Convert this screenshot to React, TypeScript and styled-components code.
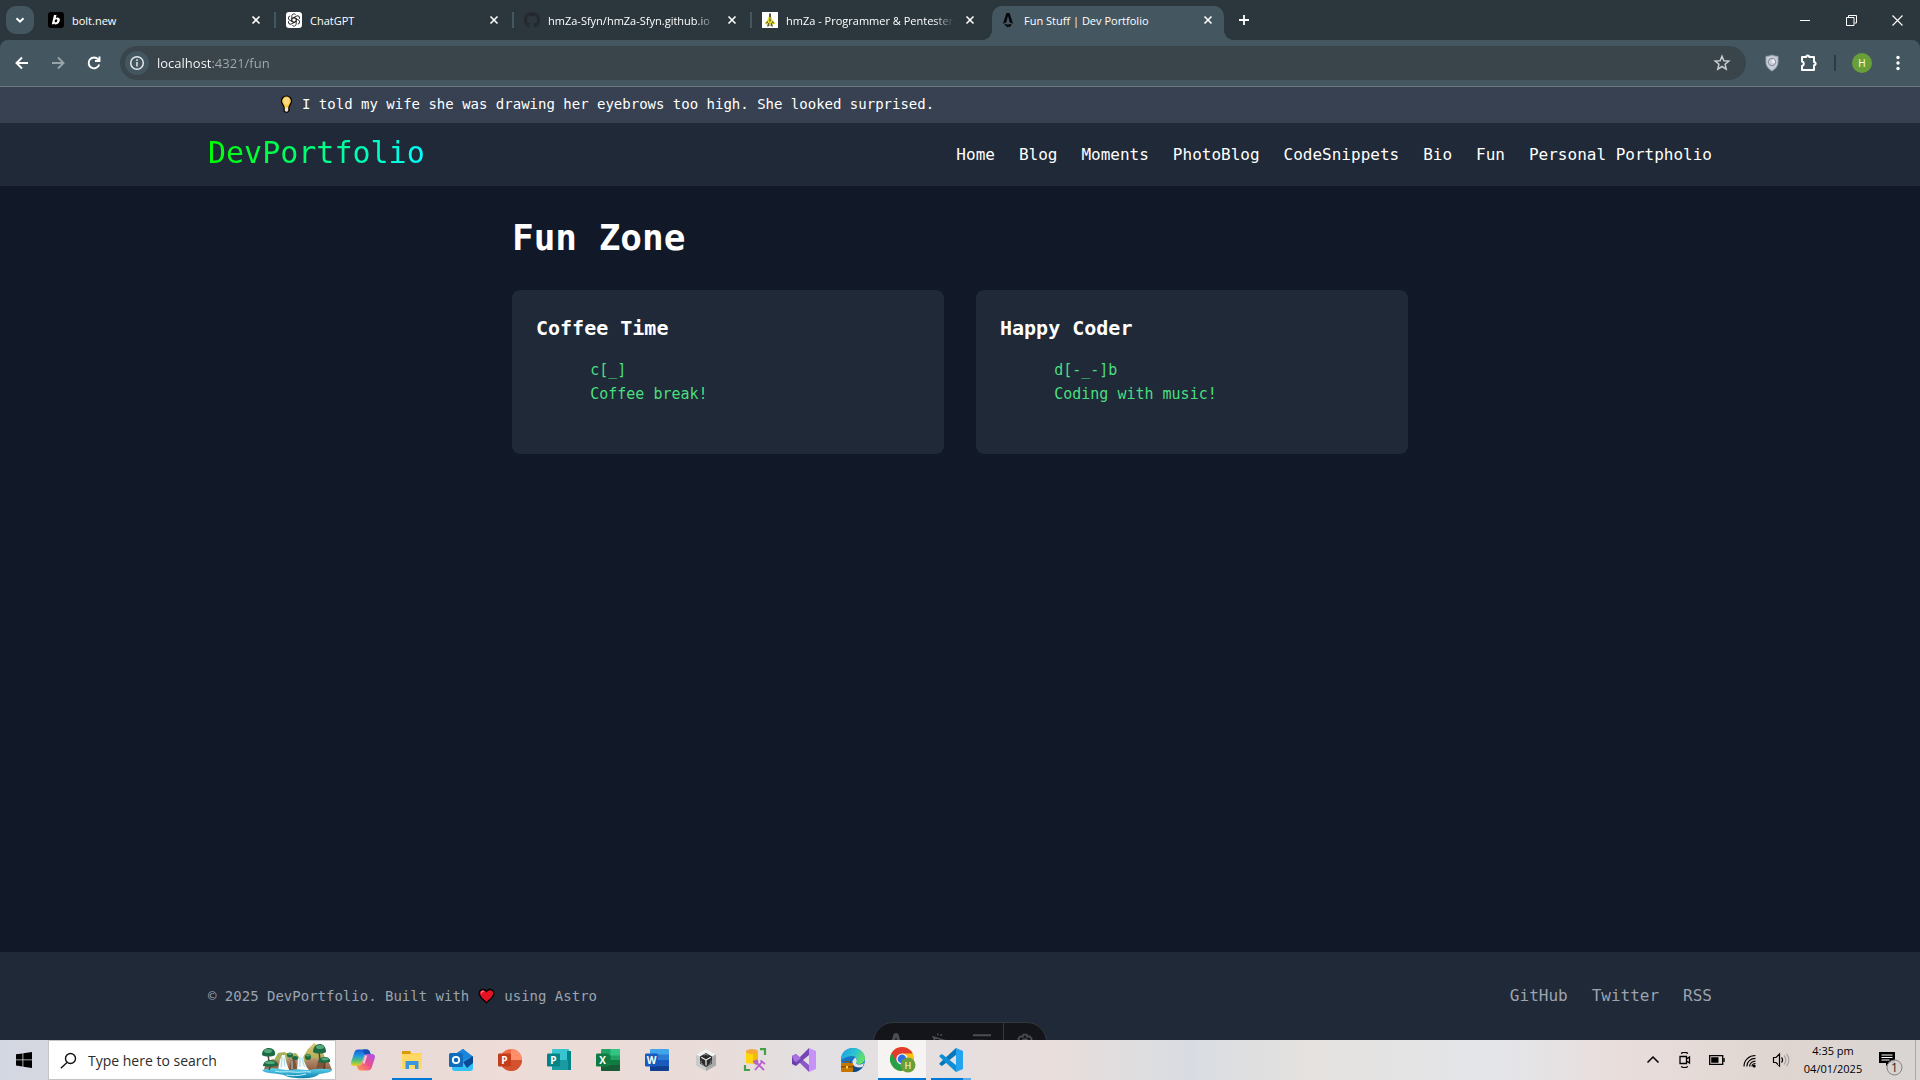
import React from "react";
import styled, { createGlobalStyle, css } from "styled-components";

const ui = `"Open Sans", "Noto Sans", sans-serif`;
const mono = `"DejaVu Sans Mono", "Liberation Mono", monospace`;

const GlobalStyle = createGlobalStyle`
  *, *::before, *::after { box-sizing: border-box; }
  body { margin: 0; background: #111827; }
  button, input { font: inherit; color: inherit; border: 0; padding: 0; background: none; }
  button { cursor: pointer; }
  h1, h2, p, pre, ul { margin: 0; padding: 0; }
  ul { list-style: none; }
  a { color: inherit; text-decoration: none; }
  svg { display: block; flex: none; }
`;

/* ---------- shell ---------- */

const Screen = styled.div`
  display: flex;
  flex-direction: column;
  height: 100vh;
  overflow: hidden;
  font-family: ${ui};
`;

const TabStrip = styled.header`
  display: flex;
  flex: none;
  height: 40px;
  padding-left: 6px;
  background: #2c373d;
  color: #fff;
`;

const TabSearch = styled.button`
  display: grid;
  place-items: center;
  width: 28px;
  height: 28px;
  margin: 6px 6px 0 0;
  border-radius: 10px;
  background: #445761;
`;

const Tabs = styled.div`
  display: flex;
  gap: 2px;
  min-width: 0;
`;

const Tab = styled.div<{ $active?: boolean }>`
  position: relative;
  display: flex;
  align-items: center;
  gap: 8px;
  width: 232px;
  height: 34px;
  margin-top: 6px;
  padding: 0 8px 6px;
  border-radius: 10px 10px 0 0;
  ${(p) =>
    p.$active &&
    css`
      background: #445761;
      &::before,
      &::after {
        content: "";
        position: absolute;
        bottom: 0;
        width: 10px;
        height: 10px;
      }
      &::before {
        left: -10px;
        background: radial-gradient(circle at 0 0, transparent 10px, #445761 10px);
      }
      &::after {
        right: -10px;
        background: radial-gradient(circle at 100% 0, transparent 10px, #445761 10px);
      }
    `}
`;

const TabTitle = styled.span<{ $fade?: boolean }>`
  flex: 1;
  min-width: 0;
  overflow: hidden;
  white-space: nowrap;
  padding-top: 2px;
  font-size: 11px;
  line-height: 18px;
  ${(p) => p.$fade && css`mask-image: linear-gradient(to right, #000 88%, transparent);`}
`;

const TabClose = styled.button`
  display: grid;
  place-items: center;
  width: 16px;
  height: 16px;
`;

const TabDivider = styled.span<{ $hidden?: boolean }>`
  width: 2px;
  height: 16px;
  margin-top: 12px;
  background: ${(p) => (p.$hidden ? "transparent" : "#445761")};
`;

const NewTab = styled.button`
  display: grid;
  place-items: center;
  width: 28px;
  height: 28px;
  margin: 6px 0 0 2px;
`;

const WindowControls = styled.div`
  display: flex;
  margin-left: auto;
`;

const WindowButton = styled.button`
  display: grid;
  place-items: center;
  width: 46px;
  height: 40px;
`;

const ToolbarBack = styled.div`
  flex: none;
  background: #2c373d;
`;

const Toolbar = styled.div`
  display: flex;
  align-items: center;
  height: 47px;
  padding: 0 4px;
  border-bottom: 1px solid #6d7b83;
  border-radius: 8px 8px 0 0;
  background: #445761;
  color: #fff;
`;

const ToolButton = styled.button<{ $dim?: boolean }>`
  display: grid;
  place-items: center;
  width: 36px;
  height: 34px;
  opacity: ${(p) => (p.$dim ? 0.45 : 1)};
`;

const AddressBar = styled.form`
  display: flex;
  flex: 1;
  align-items: center;
  gap: 8px;
  height: 34px;
  margin: 0 8px;
  padding: 0 15px 0 5px;
  border-radius: 17px;
  background: #39454b;
`;

const SiteInfo = styled.button`
  display: grid;
  place-items: center;
  width: 24px;
  height: 24px;
  border-radius: 50%;
  background: #445761;
`;

const UrlInput = styled.input`
  flex: 1;
  min-width: 0;
  height: 24px;
  font-size: 13px;
  outline: 0;
  color: transparent;
  background: linear-gradient(to right, #fff 55px, #a3abaf 55px);
  background-clip: text;
`;

const BarDivider = styled.span`
  width: 2px;
  height: 16px;
  margin: 0 8px;
  background: #2f3b41;
`;

const Avatar = styled.span`
  display: grid;
  place-items: center;
  width: 20px;
  height: 20px;
  border-radius: 50%;
  background: #689f38;
  color: #fff;
  font-size: 10px;
  line-height: 20px;
`;

/* ---------- web page ---------- */

const Page = styled.div`
  position: relative;
  display: flex;
  flex: 1;
  flex-direction: column;
  min-height: 0;
  overflow: hidden;
  background: #111827;
  color: #fff;
  font-family: ${mono};
  font-size: 16px;
  line-height: 24px;
`;

const JokeBar = styled.div`
  padding: 7px 0 9px;
  background: #374151;
`;

const Container = styled.div`
  display: flex;
  align-items: center;
  justify-content: space-between;
  max-width: 1536px;
  margin: 0 auto;
  padding: 0 16px;
`;

const Joke = styled.p`
  display: flex;
  align-items: center;
  gap: 9px;
  padding-left: 72px;
  font-size: 14px;
  line-height: 20px;
`;

const SiteHeader = styled.div`
  padding: 12px 0 15px;
  background: #1f2937;
`;

const SiteNav = styled.nav`
  padding-top: 4px;
`;

const Brand = styled.a`
  font-size: 30px;
  line-height: 36px;
  color: transparent;
  background: linear-gradient(to right, #00ff00, #00ffff);
  background-clip: text;
`;

const LinkRow = styled.ul<{ $muted?: boolean }>`
  display: flex;
  gap: 24px;
  color: ${(p) => (p.$muted ? "#9ca3af" : "#fff")};
`;

const Main = styled.main`
  flex: 1;
  width: 100%;
  max-width: 896px;
  margin: 0 auto;
  padding: 32px 0;
`;

const Title = styled.h1`
  margin-bottom: 32px;
  font-size: 36px;
  line-height: 40px;
`;

const CardGrid = styled.div`
  display: grid;
  grid-template-columns: 1fr 1fr;
  gap: 32px;
`;

const Card = styled.section`
  padding: 24px;
  border-radius: 8px;
  background: #1f2937;
`;

const CardTitle = styled.h2`
  margin-bottom: 16px;
  font-size: 20px;
  line-height: 28px;
`;

const Ascii = styled.pre`
  min-height: 72px;
  font-family: ${mono};
  font-size: 15px;
  line-height: 24px;
  color: #4ade80;
`;

const SiteFooter = styled.footer`
  padding: 32px 0;
  background: #1f2937;
`;

const Copyright = styled.p`
  display: flex;
  align-items: center;
  gap: 9px;
  font-size: 14px;
  line-height: 24px;
  color: #9ca3af;
`;

const DevToolbar = styled.div`
  position: absolute;
  bottom: -22px;
  left: 50%;
  display: flex;
  height: 40px;
  overflow: hidden;
  border: 1px solid #343841;
  border-radius: 20px;
  background: #13151a;
  color: #4b4d52;
  transform: translateX(-50%);
`;

const DevButton = styled.button<{ $last?: boolean }>`
  display: grid;
  place-items: center;
  width: 43px;
  height: 38px;
  border-left: ${(p) => (p.$last ? "1px solid #343841" : "0")};
`;

/* ---------- taskbar ---------- */

const Taskbar = styled.footer`
  display: flex;
  flex: none;
  height: 40px;
  color: #000;
  background: linear-gradient(
    to right,
    #d3d7e1 0,
    #e6dad8 18%,
    #eddcd7 26%,
    #e9dcd9 37%,
    #e2e0e3 43%,
    #e9dedc 55%,
    #d8dce2 62%,
    #e5e2df 68%,
    #e3e5e9 78%,
    #e9dedc 84%,
    #dfd5d0 93%,
    #d8d5d3 100%
  );
`;

const StartButton = styled.button`
  display: grid;
  place-items: center;
  width: 48px;
`;

const SearchBox = styled.label`
  display: flex;
  align-items: center;
  width: 288px;
  margin-right: 3px;
  padding: 0 2px 0 11px;
  border: 1px solid #c4c4c6;
  background: #fff;
`;

const SearchInput = styled.input`
  flex: 1;
  min-width: 0;
  margin-left: 11px;
  font-size: 14px;
  outline: 0;
  &::placeholder {
    color: #2b2b2b;
    opacity: 1;
  }
`;

const Apps = styled.nav`
  display: flex;
  gap: 1px;
`;

const AppButton = styled.button<{ $state?: "open" | "active" | "stacked" }>`
  display: grid;
  place-items: center;
  width: 48px;
  height: 40px;
  ${(p) =>
    p.$state === "open" &&
    css`background: linear-gradient(#0078d7, #0078d7) center bottom / 40px 2px no-repeat;`}
  ${(p) =>
    p.$state === "stacked" &&
    css`background: linear-gradient(to right, #0078d7 32px, #62aee8 32px) center bottom / 40px 2px no-repeat;`}
  ${(p) =>
    p.$state === "active" &&
    css`background: linear-gradient(#0078d7, #0078d7) center bottom / 48px 2px no-repeat, #f6f3f3;`}
`;

const Tray = styled.div`
  display: flex;
  align-items: center;
  margin-left: auto;
`;

const TrayButton = styled.button`
  display: grid;
  place-items: center;
  width: 32px;
  height: 40px;
`;

const Clock = styled.button`
  width: 72px;
  height: 40px;
  font-size: 11px;
  line-height: 18px;
  text-align: center;
`;

const ActionCenter = styled.button`
  display: grid;
  place-items: center;
  width: 46px;
  height: 40px;
`;

const ShowDesktop = styled.button`
  width: 5px;
  height: 40px;
  border-left: 1px solid #aaa6a4;
`;

/* ---------- drawings ---------- */

const Stroke = ({ d, size = 16, w = 2, box = 16 }: { d: string; size?: number; w?: number; box?: number }) => (
  <svg width={size} height={size} viewBox={`0 0 ${box} ${box}`} fill="none" stroke="currentColor" strokeWidth={w} aria-hidden="true">
    <path d={d} />
  </svg>
);

const BoltIcon = () => (
  <svg width="16" height="16" viewBox="0 0 16 16">
    <rect width="16" height="16" rx="3" fill="#000" />
    <path fill="#fff" fillRule="evenodd" d="M6 3h2.500l-.7 3c.5-.4 1.100-.6 1.700-.6 1.700 0 2.700 1.200 2.300 3.100-.4 2.100-1.900 3.900-4 3.900-.8 0-1.400-.3-1.800-.9L5.600 12.300H3.800zM8.200 7.300c-.7 0-1.300.6-1.500 1.500-.2.900.2 1.500.9 1.500.8 0 1.400-.7 1.600-1.600.2-.8-.2-1.400-1-1.400z" />
  </svg>
);

const ChatGptIcon = () => (
  <svg width="16" height="16" viewBox="0 0 16 16">
    <rect width="16" height="16" rx="3" fill="#fff" />
    <g fill="none" stroke="#222" strokeWidth="0.9">
      {[0, 60, 120, 180, 240, 300].map((a) => (
        <path key={a} transform={`rotate(${a} 8 8)`} d="M8 5.500 5.800 6.800V3.900a2.200 2.200 0 0 1 3.900-1.200M8 5.500l2.600 1.500" />
      ))}
    </g>
  </svg>
);

const GithubIcon = () => (
  <svg width="16" height="16" viewBox="0 0 16 16" fill="#24292f">
    <path d="M8 0C3.580 0 0 3.580 0 8c0 3.540 2.290 6.530 5.470 7.590.4.070.55-.17.55-.38v-1.490c-2.010.37-2.530-.49-2.690-.94-.09-.23-.48-.94-.82-1.130-.28-.15-.68-.52-.01-.53.63-.01 1.080.58 1.230.82.72 1.210 1.870.87 2.330.66.07-.52.28-.87.51-1.070-1.780-.2-3.640-.89-3.640-3.950 0-.87.31-1.590.82-2.150-.08-.2-.36-1.020.08-2.120 0 0 .67-.21 2.200.82a7.600 7.600 0 0 1 4 0c1.530-1.040 2.200-.82 2.200-.82.44 1.100.16 1.920.08 2.120.51.56.82 1.270.82 2.150 0 3.070-1.870 3.750-3.650 3.950.29.25.54.73.54 1.480v2.200c0 .21.15.46.55.38A8 8 0 0 0 16 8c0-4.420-3.580-8-8-8z" />
  </svg>
);

const ArtIcon = () => (
  <svg width="16" height="16" viewBox="0 0 16 16">
    <rect width="16" height="16" fill="#fff" />
    <path fill="#e0dc2c" d="M7 4h2l1.500 4 3 3.500-2.500 1H5l-2.500-1 3-3.500z" />
    <path fill="#5b5a35" d="M7 1.500h2v4H7zM7.300 6.500h1.400v3H7.300zM4 10.500l2-1.500v1.500l-1.500 1zM12 10.500 10 9v1.500l1.500 1zM5 14.500 6.200 11h1v2h1.600v-2h1l1.200 3.500H9.500l-.5-1H7l-.5 1z" />
  </svg>
);

const AstroIcon = ({ size = 16, fill = "#060708" }: { size?: number; fill?: string }) => (
  <svg width={size} height={size} viewBox="0 0 16 16" fill={fill}>
    <path d="M7 1h2.100c.4 0 .6.200.7.500L13 11.700c-1-.5-2.100-.9-3.200-1.100L8.300 4.800c-.1-.3-.5-.3-.6 0l-1.500 5.800c-1.100.2-2.200.6-3.200 1.100L6.200 1.500C6.300 1.200 6.600 1 7 1zM4.700 11.700c1.300 1 5.300 1 6.600 0 .3 1.100-.2 2.100-1.200 2.700-.5.300-.6.700-.6 1.100-.5-.2-.8-.7-.7-1.200-.6.100-.9.500-.8 1.500-.7-.3-.9-.9-.9-1.500-1.600-.3-2.600-1.200-2.400-2.600z" />
  </svg>
);

const InfoIcon = () => (
  <svg width="16" height="16" viewBox="0 0 16 16" fill="none" stroke="#e3e7e9" strokeWidth="1.500">
    <circle cx="8" cy="8" r="6.300" />
    <path d="M8 7v4.500M8 4.300v1.600" />
  </svg>
);

const ShieldIcon = () => (
  <svg width="16" height="18" viewBox="0 0 16 18">
    <path d="M8 1c2 1 4 1.400 6 1.400V8c0 4-2.500 6.700-6 9-3.500-2.300-6-5-6-9V2.400C4 2.400 6 2 8 1z" fill="#c9cfd8" stroke="#9ba5b2" />
    <circle cx="8" cy="8" r="3.600" fill="none" stroke="#8e98a5" strokeWidth="1.200" />
    <path d="M8 8h3M8 8l2-2.500" stroke="#f3f5f7" strokeWidth="1.300" />
  </svg>
);

const PuzzleIcon = () => (
  <svg width="20" height="20" viewBox="0 0 20 20" fill="none" stroke="#fff" strokeWidth="2" strokeLinejoin="round">
    <path d="M4 4h4.200a1.500 1.500 0 0 1 3 0H16v5a1.600 1.600 0 0 1 0 3.200V17H4v-4a2.300 2.300 0 0 0 0-4.500z" />
  </svg>
);

const BulbIcon = () => (
  <svg width="13" height="18" viewBox="0 0 13 18">
    <path d="M6.500 1a5 5 0 0 1 5 5c0 2.800-2.300 4-2.600 6.500v3.300l-1.400 1.400h-2l-1.400-1.400v-3.300C3.800 10 1.500 8.800 1.500 6a5 5 0 0 1 5-5z" fill="#ffc83d" stroke="#000" strokeWidth="1.200" />
    <path d="M5 12.500h3v3L7 16.500H6l-1-1z" fill="#e6e6e6" />
    <path d="M4 3.500C5 2 8 2 9 3.500c1.500 2-.5 5-1.500 6.500h-2C4.500 8.500 2.500 5.500 4 3.500z" fill="#ffd983" />
  </svg>
);

const HeartIcon = () => (
  <svg width="17" height="16" viewBox="0 0 17 16">
    <path d="M8.500 14.700C5 11.500 1.200 9 1.200 5.200 1.200 1.200 6.500.2 8.500 3.500c2-3.300 7.300-2.300 7.300 1.700 0 3.800-3.800 6.300-7.300 9.500z" fill="#e81224" stroke="#000" strokeWidth="1.300" />
    <path d="M3.500 5c0-1.200.8-1.800 1.800-1.800" stroke="#f58a92" strokeWidth="1.200" fill="none" strokeLinecap="round" />
  </svg>
);

const Waterfall = () => (
  <svg width="72" height="37" viewBox="0 0 72 37">
    <defs>
      <linearGradient id="sea" x1="0" y1="0" x2="0" y2="1">
        <stop offset="0" stopColor="#5cd3ee" />
        <stop offset="1" stopColor="#0b7fae" />
      </linearGradient>
      <linearGradient id="hill" x1="0" y1="0" x2="0" y2="1">
        <stop offset="0" stopColor="#dcc76e" />
        <stop offset="1" stopColor="#8f9a4a" />
      </linearGradient>
      <linearGradient id="rock" x1="0" y1="0" x2="0" y2="1">
        <stop offset="0" stopColor="#c59a78" />
        <stop offset="1" stopColor="#8e6247" />
      </linearGradient>
    </defs>
    <path d="M34 24 42 15 47 7 53 1l7 5 6 14-4 8H36z" fill="url(#hill)" />
    <path d="M12 20 17 11l6-1 6 2 6-1 4 5 2 10H14z" fill="#a9b25b" />
    <path d="M3 28c1-6 4-9 9-11l6 2 3 9zM24 28l1-10 6-4 5 3 3 11zM43 28l1-9 5-3 6 1 5-2 7 3 4 10z" fill="url(#rock)" />
    <path d="M28 28l2-9 4-2 2 11zM55 28l2-9 5-2 4 11z" fill="#7f5438" />
    <path d="M17 28l2-10 2-5h3l1 6 3 9zM36 28l1-11 2-4h3l1 6 4 9z" fill="#f1fafd" />
    <path d="M21 15l-1 12M23 16l1 11M39 15v12M41 16l3 11M31 19v8" stroke="#a6d9ea" fill="none" />
    <path d="M1 28c6-2 13-2 19-1l8 1 9-1 11 1c8-1 17-2 23 0-1 3-8 3-13 4-2 5-28 6-35 1C16 31 3 32 1 28z" fill="url(#sea)" />
    <path d="M14 29c6 2 12 0 18 1s12-1 18 0M25 33c6 1 13 1 20-1" stroke="#bdf0fb" fill="none" />
    <path d="M18 27c2-3 4-1 5-3 2 1 4 1 5 4zM36 27c2-3 4-2 6-3 2 1 4 1 6 4z" fill="#fff" />
    <path d="M7 12 8 20M58 9l1 10M64 19l-1 8M10 23l-2 5" stroke="#5c4030" strokeWidth="1.500" />
    <g fill="#1c6b45">
      <path d="M1 13c0-5 3-7 7-7s7 3 6 7c-3 2-10 2-13 0zM2 24c0-4 4-6 8-6s8 3 7 6c-4 1-11 1-15 0zM52 10c0-5 3-8 7-8s6 4 6 8c-3 2-10 2-13 0zM57 20c1-4 4-5 7-5s6 2 5 5c-3 1-9 1-12 0z" />
      <ellipse cx="29" cy="13" rx="3" ry="2.500" />
      <ellipse cx="34" cy="16" rx="3" ry="2" />
      <ellipse cx="47" cy="15" rx="3" ry="3" />
    </g>
    <g fill="#52a878">
      <ellipse cx="7" cy="9" rx="4" ry="2" />
      <ellipse cx="9" cy="20.500" rx="5" ry="1.600" />
      <ellipse cx="59" cy="5" rx="4" ry="2" />
      <ellipse cx="64" cy="17" rx="3.500" ry="1.400" />
      <ellipse cx="29" cy="12" rx="2" ry="1" />
      <ellipse cx="47" cy="13.500" rx="2" ry="1" />
    </g>
  </svg>
);

const Icon24 = ({ children }: { children: React.ReactNode }) => (
  <svg width="24" height="24" viewBox="0 0 24 24" aria-hidden="true">
    {children}
  </svg>
);

const letter = { fill: "#fff", fontFamily: "Open Sans, sans-serif", fontWeight: 700, fontSize: 10, textAnchor: "middle" as const };

const Copilot = () => (
  <Icon24>
    <defs>
      <linearGradient id="cpA" x1="0" y1="0" x2="0" y2="1">
        <stop offset="0" stopColor="#1b58d8" />
        <stop offset=".4" stopColor="#1e9be0" />
        <stop offset=".7" stopColor="#5cc46a" />
        <stop offset="1" stopColor="#f5cf1c" />
      </linearGradient>
      <linearGradient id="cpB" x1="1" y1="0" x2="0" y2="1">
        <stop offset="0" stopColor="#a553f0" />
        <stop offset=".5" stopColor="#ee4f8b" />
        <stop offset="1" stopColor="#ff9d4d" />
      </linearGradient>
    </defs>
    <path d="M7 1.500h9c1.500 0 2.400 1 2.900 2.500l.8 2.500h-4c-1.600 0-2.400.8-3 2.500l-2 6C10 17 9 18 7 18H3c-2.500 0-3.500-2-2.700-4.600L3.300 4.500C4 2.500 5 1.500 7 1.500z" fill="url(#cpA)" />
    <path d="M12 1.500h4c1.500 0 2.400 1 2.900 2.500l.8 2.500h-5.200c-1 0-1.700-.8-2-2z" fill="#174db5" />
    <path d="M17 22.500H9.500c-1.500 0-2.400-1-2.900-2.500l-.8-2.500H8c1.600 0 2.400-.8 3-2.500l2-6c.7-2 1.700-3 3.500-3H21c2.500 0 3.500 2 2.700 4.600l-3 8.900c-.7 2-1.700 3-3.700 3z" fill="url(#cpB)" />
    <path d="M11.500 15 14 7.500h2.200L13.500 16z" fill="#f3e8f2" opacity=".8" />
  </Icon24>
);

const Explorer = () => (
  <Icon24>
    <path d="M2 3h8l1.500 2H22v16H2z" fill="#ffd35c" />
    <path d="M2 3h8l1 2-1 1H2z" fill="#d99a0b" />
    <path d="M2 7h20v14H2z" fill="#ffd966" />
    <path d="M5.500 13h13v8H15v-4H9v4H5.500z" fill="#3b97dd" />
  </Icon24>
);

const Outlook = () => (
  <Icon24>
    <path d="M3 8 14 1l9 7v11l-3 4H7l-4-4z" fill="#1268c3" />
    <path d="M14 1 23 8l-9 7-8-8z" fill="#1a86dd" />
    <path d="M12 14 24 8v12c0 2-1 3-3 3H6c-2 0-3-1-3-3v-3z" fill="#33c1f5" />
    <path d="m14 14 10-6v7l-6 5z" fill="#0d4a96" />
    <rect x="0" y="5" width="14" height="14" rx="1.500" fill="#0f6cbd" />
    <circle cx="7" cy="12" r="3.200" fill="none" stroke="#fff" strokeWidth="1.800" />
  </Icon24>
);

const PowerPoint = () => (
  <Icon24>
    <circle cx="13" cy="12" r="11" fill="#ed6c47" />
    <path d="M13 1a11 11 0 0 1 11 11H13z" fill="#ff8f6b" />
    <path d="M2 12h22a11 11 0 0 1-22 0z" fill="#d35230" />
    <rect x="0" y="5.500" width="13" height="13" rx="1.200" fill="#c43e1c" />
    <text x="6.500" y="15.800" {...letter}>P</text>
  </Icon24>
);

const Publisher = () => (
  <Icon24>
    <rect x="5" y="1" width="17" height="21" rx="1" fill="#37c6d0" />
    <path d="M20 3h4v19h-4z" fill="#038387" />
    <path d="M5 12h16v10H5z" fill="#1a9ba1" />
    <rect x="0" y="5.500" width="13" height="13" rx="1.200" fill="#038387" />
    <text x="6.500" y="15.800" {...letter}>P</text>
  </Icon24>
);

const Excel = () => (
  <Icon24>
    <rect x="5" y="1" width="19" height="22" rx="1.200" fill="#21a366" />
    <path d="M14.500 1H23a1 1 0 0 1 1 1v5.500h-9.500z" fill="#33c481" />
    <path d="M5 7.500h9.500v9H5zM14.500 12H24v5h-9.500z" fill="#107c41" />
    <path d="M5 17h19v5a1 1 0 0 1-1 1H6a1 1 0 0 1-1-1z" fill="#185c37" />
    <rect x="0" y="5.500" width="13" height="13" rx="1.200" fill="#107c41" />
    <text x="6.500" y="15.800" {...letter}>X</text>
  </Icon24>
);

const Word = () => (
  <Icon24>
    <rect x="5" y="1" width="19" height="22" rx="1.200" fill="#41a5ee" />
    <path d="M5 6.500h19V12H5z" fill="#2b7cd3" />
    <path d="M5 12h19v5.500H5z" fill="#185abd" />
    <path d="M5 17.500h19V22a1 1 0 0 1-1 1H6a1 1 0 0 1-1-1z" fill="#103f91" />
    <rect x="0" y="5.500" width="13" height="13" rx="1.200" fill="#185abd" />
    <text x="6.500" y="15.800" {...letter}>W</text>
  </Icon24>
);

const Unity = () => (
  <Icon24>
    <path d="m12 1 10 5.500v11L12 23 2 17.500v-11z" fill="#c9cbcb" />
    <path d="m12 1 10 5.500L12 12 2 6.500z" fill="#f2f2f2" />
    <path d="M12 12l10-5.500v11L12 23z" fill="#a8aaaa" />
    <path d="m12 5 6 3.500v7L12 19l-6-3.500v-7z" fill="#2a2a2a" />
    <path d="M12 12v5.500M12 12 7.200 9.200M12 12l4.800-2.800" stroke="#e4e4e4" strokeWidth="1.300" />
    <path d="M7 12.500v2.700l2.500 1.500M17 12.500v2.700l-2.500 1.500M9.800 7.300 12 6.200l2.200 1.100" stroke="#8a8a8a" fill="none" />
  </Icon24>
);

const SqlTools = () => (
  <Icon24>
    <path d="M3 3.500v11c0 1.500 12 1.500 12 0v-11z" fill="#ffd60a" />
    <path d="M10 4h5v11c-1 .8-3 1-5 1z" fill="#f2bd00" />
    <ellipse cx="9" cy="3.500" rx="6" ry="2.500" fill="#f5a83c" />
    <path d="M17 1.200h5V7M2 17v5h5" stroke="#43a047" strokeWidth="2.200" fill="none" />
    <path d="m12 22 7-8M13 14l8 8M17.500 12.500 22 16M11 13.500l2.500-1 1 1-1.500 2.500z" stroke="#b65fd0" strokeWidth="1.800" fill="none" />
  </Icon24>
);

const VisualStudio = () => (
  <Icon24>
    <path d="M0 8 4 6v12l-4-2z" fill="#6b3fa8" />
    <path d="M4 6 17 17v7L7 14 4 11z" fill="#8a57c8" />
    <path d="M4 18 17 7V0L7 10l-3 3z" fill="#7546b5" />
    <path d="M0 8 4 6l5 4.300L4 14l-2-1z" fill="#a873dd" />
    <path d="m17 0 7 3v18l-7 3z" fill="#c792f5" />
  </Icon24>
);

const EdgeWork = () => (
  <Icon24>
    <defs>
      <linearGradient id="edA" x1="0" y1="0" x2="1" y2=".4">
        <stop offset="0" stopColor="#1b9de2" />
        <stop offset=".6" stopColor="#2bc3d2" />
        <stop offset="1" stopColor="#62e068" />
      </linearGradient>
    </defs>
    <circle cx="12" cy="12" r="12" fill="#1575c9" />
    <path d="M0 12C0 4 5.500 0 12 0c7 0 12 5 12 10 0 4-3 6-6 6-2.500 0-3.500-1-3-2 1.500-3 0-6-4-6-5 0-9 3-11 4z" fill="url(#edA)" />
    <path d="M10 12c0 6 5 9 12 6-2 4-6 6-10 6-3 0-5-6-2-12z" fill="#114a8b" />
    <path d="M14 9.500c2 1 2 4 1 5.500 1 2 5 2 8 0l-1.500 4c-6 1.500-10.500-1-10-6z" fill="#e6e3e5" />
    <rect x="0" y="15" width="12" height="9" rx="1" fill="#c77700" />
    <path d="M4 15v-1.500h4V15" fill="none" stroke="#8a4f00" />
    <path d="M0 18h12v1.500H0z" fill="#8a4f00" />
    <rect x="5" y="18" width="2" height="2.500" fill="#ffd35c" />
  </Icon24>
);

const Chrome = () => (
  <svg width="28" height="28" viewBox="0 0 28 28">
    <circle cx="14" cy="13" r="12" fill="#fbc116" />
    <path d="M3.600 7A12 12 0 0 0 14 25l5.200-9L14 13z" fill="#27a149" />
    <path d="M14 7.500h10.700A12 12 0 0 0 3.600 7l5.600 9.500z" fill="#e33b2e" />
    <circle cx="14" cy="13" r="5.600" fill="#fff" />
    <circle cx="14" cy="13" r="4.400" fill="#2a72e8" />
    <circle cx="20" cy="19" r="7.500" fill="#689f38" />
    <text x="20" y="22.500" fill="#fff" fontFamily="Roboto, sans-serif" fontSize="9" textAnchor="middle">H</text>
  </svg>
);

const VsCode = () => (
  <Icon24>
    <path d="M17.500 6.500 3 18l-2.500-1.500v-1.200L17 0l1 1z" fill="#0877b9" />
    <path d="M17.500 17.500 3 6 .5 7.500v1.200L17 24l1-1z" fill="#0d8fd8" />
    <path d="M17 0 24 3v18l-7 3z" fill="#24a3ee" />
  </Icon24>
);

const tabs = [
  { title: "bolt.new", icon: <BoltIcon /> },
  { title: "ChatGPT", icon: <ChatGptIcon /> },
  { title: "hmZa-Sfyn/hmZa-Sfyn.github.io", icon: <GithubIcon />, fade: true },
  { title: "hmZa - Programmer & Pentester", icon: <ArtIcon />, fade: true },
  { title: "Fun Stuff | Dev Portfolio", icon: <AstroIcon />, active: true },
];

const navLinks = ["Home", "Blog", "Moments", "PhotoBlog", "CodeSnippets", "Bio", "Fun", "Personal Portpholio"];

const cards = [
  { title: "Coffee Time", art: "      c[_]\n      Coffee break!\n" },
  { title: "Happy Coder", art: "      d[-_-]b\n      Coding with music!\n" },
];

const apps: { name: string; icon: React.ReactNode; state?: "open" | "active" | "stacked" }[] = [
  { name: "Copilot", icon: <Copilot /> },
  { name: "File Explorer", icon: <Explorer />, state: "open" },
  { name: "Outlook", icon: <Outlook /> },
  { name: "PowerPoint", icon: <PowerPoint /> },
  { name: "Publisher", icon: <Publisher /> },
  { name: "Excel", icon: <Excel /> },
  { name: "Word", icon: <Word /> },
  { name: "Unity Hub", icon: <Unity /> },
  { name: "SQL tools", icon: <SqlTools /> },
  { name: "Visual Studio", icon: <VisualStudio /> },
  { name: "Edge", icon: <EdgeWork /> },
  { name: "Chrome", icon: <Chrome />, state: "active" },
  { name: "VS Code", icon: <VsCode />, state: "stacked" },
];

function BrowserChrome() {
  return (
    <>
      <TabStrip>
        <TabSearch aria-label="Search tabs">
          <Stroke size={10} box={10} d="M1.500 3.200 5 6.700l3.500-3.500" />
        </TabSearch>
        <Tabs>
          {tabs.map((t, i) => (
            <React.Fragment key={t.title}>
              <Tab $active={t.active}>
                {t.icon}
                <TabTitle $fade={t.fade}>{t.title}</TabTitle>
                <TabClose aria-label={`Close ${t.title}`}>
                  <Stroke size={10} box={10} w={1.6} d="M1.500 1.500l7 7M8.500 1.500l-7 7" />
                </TabClose>
              </Tab>
              <TabDivider $hidden={i > 2} />
            </React.Fragment>
          ))}
        </Tabs>
        <NewTab aria-label="New tab">
          <Stroke size={12} box={12} w={1.8} d="M6 1v10M1 6h10" />
        </NewTab>
        <WindowControls>
          <WindowButton aria-label="Minimize">
            <Stroke size={10} box={10} w={1} d="M0 5.500h10" />
          </WindowButton>
          <WindowButton aria-label="Restore">
            <Stroke size={11} box={11} w={1} d="M.5 2.500h7.500v8H.5zM2.500 2.500v-2h8v7.500H8.500" />
          </WindowButton>
          <WindowButton aria-label="Close">
            <Stroke size={11} box={11} w={1.1} d="M.5.500l10 10M10.500.500l-10 10" />
          </WindowButton>
        </WindowControls>
      </TabStrip>
      <ToolbarBack>
        <Toolbar>
          <ToolButton aria-label="Back">
            <Stroke w={1.9} d="M14 8H3M8 2.500 2.500 8 8 13.500" />
          </ToolButton>
          <ToolButton aria-label="Forward" $dim>
            <Stroke w={1.9} d="M2 8h11M8 2.500 13.500 8 8 13.500" />
          </ToolButton>
          <ToolButton aria-label="Reload">
            <Stroke w={1.9} d="M13.200 9.500A5.400 5.400 0 1 1 12.200 4.500L13.500 6M13.500 1.500V6H9" />
          </ToolButton>
          <AddressBar onSubmit={(e) => e.preventDefault()}>
            <SiteInfo type="button" aria-label="View site information">
              <InfoIcon />
            </SiteInfo>
            <UrlInput aria-label="Address" defaultValue="localhost:4321/fun" />
            <button type="button" aria-label="Bookmark this tab">
              <svg width="18" height="18" viewBox="0 0 18 18" fill="none" stroke="#c8cdd0" strokeWidth="1.500">
                <path d="m9 2.200 1.900 4.500 4.900.4-3.700 3.200 1.100 4.800L9 12.500l-4.200 2.600 1.100-4.800L2.200 7.100l4.900-.4z" />
              </svg>
            </button>
          </AddressBar>
          <ToolButton aria-label="Shield extension">
            <ShieldIcon />
          </ToolButton>
          <ToolButton aria-label="Extensions">
            <PuzzleIcon />
          </ToolButton>
          <BarDivider />
          <ToolButton aria-label="Profile">
            <Avatar>H</Avatar>
          </ToolButton>
          <ToolButton aria-label="Menu">
            <svg width="4" height="16" viewBox="0 0 4 16" fill="#fff">
              <circle cx="2" cy="2.500" r="1.700" />
              <circle cx="2" cy="8" r="1.700" />
              <circle cx="2" cy="13.500" r="1.700" />
            </svg>
          </ToolButton>
        </Toolbar>
      </ToolbarBack>
    </>
  );
}

function Site() {
  return (
    <Page>
      <JokeBar>
        <Container>
          <Joke>
            <BulbIcon />
            I told my wife she was drawing her eyebrows too high. She looked surprised.
          </Joke>
        </Container>
      </JokeBar>
      <SiteHeader>
        <Container>
          <Brand href="#home">DevPortfolio</Brand>
          <SiteNav>
            <LinkRow>
              {navLinks.map((l) => (
                <li key={l}>
                  <a href="#nav">{l}</a>
                </li>
              ))}
            </LinkRow>
          </SiteNav>
        </Container>
      </SiteHeader>
      <Main>
        <Title>Fun Zone</Title>
        <CardGrid>
          {cards.map((c) => (
            <Card key={c.title}>
              <CardTitle>{c.title}</CardTitle>
              <Ascii>{c.art}</Ascii>
            </Card>
          ))}
        </CardGrid>
      </Main>
      <SiteFooter>
        <Container>
          <Copyright>
            © 2025 DevPortfolio. Built with
            <HeartIcon />
            using Astro
          </Copyright>
          <LinkRow $muted>
            {["GitHub", "Twitter", "RSS"].map((l) => (
              <li key={l}>
                <a href="#footer">{l}</a>
              </li>
            ))}
          </LinkRow>
        </Container>
      </SiteFooter>
      <DevToolbar>
        <DevButton aria-label="Astro menu">
          <AstroIcon size={20} fill="#4b4d52" />
        </DevButton>
        <DevButton aria-label="Inspect">
          <Stroke size={18} w={1.4} d="M3 3.500 14 7l-5 2-2 5zM7 2V.5M9.500 2.500l1-1.500" />
        </DevButton>
        <DevButton aria-label="Audit">
          <Stroke size={18} w={1.8} d="M0 2h16M0 7h9M0 12h6M11 7a3 3 0 1 1 0 6 3 3 0 0 1 0-6" />
        </DevButton>
        <DevButton aria-label="Settings" $last>
          <Stroke
            size={18}
            w={1.5}
            d="M6.500 1.500h3l.5 2 2-.7 2 2.200-1 1.800 2 1.200-.5 2.500-2 .5v2.500l-2.500 1L8 13l-2 1.500-2.500-1V11l-2-.5L1 8l2-1.200L2 5l2-2.200 2 .7zM8 5.500a2.500 2.500 0 1 0 0 5 2.500 2.500 0 0 0 0-5z"
          />
        </DevButton>
      </DevToolbar>
    </Page>
  );
}

function WindowsTaskbar() {
  return (
    <Taskbar>
      <StartButton aria-label="Start">
        <svg width="16" height="16" viewBox="0 0 16 16">
          <path d="M0 2.300 6.500 1.400v6.100H0zM7.300 1.300 16 0v7.500H7.300zM0 8.300h6.500v6.100L0 13.500zM7.300 8.300H16V16l-8.700-1.300z" />
        </svg>
      </StartButton>
      <SearchBox>
        <svg width="17" height="17" viewBox="0 0 17 17" fill="none" stroke="#111" strokeWidth="1.400">
          <circle cx="10.500" cy="6.500" r="5" />
          <path d="M7 10.500.8 16.300" />
        </svg>
        <SearchInput aria-label="Search" placeholder="Type here to search" />
        <Waterfall />
      </SearchBox>
      <Apps>
        {apps.map((a) => (
          <AppButton key={a.name} aria-label={a.name} $state={a.state}>
            {a.icon}
          </AppButton>
        ))}
      </Apps>
      <Tray>
        <TrayButton aria-label="Show hidden icons">
          <Stroke size={14} box={14} w={1.5} d="M1.500 9.500 7 4l5.500 5.500" />
        </TrayButton>
        <TrayButton aria-label="Meet now">
          <Stroke w={1.3} d="M3 4.500h6.500v7H3zM9.500 7l3-2v6l-3-2M4 1.500C6 .3 9 .3 11 1.500M4 14.500c2 1.200 5 1.200 7 0" />
        </TrayButton>
        <TrayButton aria-label="Battery">
          <svg width="16" height="10" viewBox="0 0 16 10">
            <path d="M.7.700h13v8.600H.7z" fill="none" stroke="#000" strokeWidth="1.300" />
            <path d="M2.200 2.200h7.300v5.600H2.200zM14.300 3h1.400v4h-1.400z" />
          </svg>
        </TrayButton>
        <TrayButton aria-label="Wi-Fi">
          <svg width="16" height="16" viewBox="0 0 16 16" fill="none" stroke="#000" strokeWidth="1.200">
            <path d="M3 14.500C3 8 8 3.500 14.500 3.500M5.800 14.500c0-4.800 3.900-8.200 8.700-8.200M8.600 14.500c0-3.200 2.700-5.400 5.900-5.400M11 14.500c0-1.800 1.500-3 3.500-3" />
            <circle cx="13.200" cy="14" r="1.500" fill="#000" stroke="none" />
          </svg>
        </TrayButton>
        <TrayButton aria-label="Volume">
          <svg width="18" height="16" viewBox="0 0 18 16" fill="none" stroke="#000" strokeWidth="1.200">
            <path d="M1.500 5.500h2.500L7.500 2v12L4 10.500H1.500zM9.500 5.500c1.300 1.500 1.300 3.500 0 5" />
            <path d="M12 3.500c2.300 2.700 2.300 6.300 0 9M14.500 1.800c3.200 3.700 3.200 8.700 0 12.400" stroke="#a5a09e" />
          </svg>
        </TrayButton>
        <Clock>
          4:35 pm
          <br />
          04/01/2025
        </Clock>
        <ActionCenter aria-label="Notifications">
          <svg width="26" height="32" viewBox="0 0 26 32">
            <path d="M0 8h16v11h-6l-3 3v-3H0z" fill="#000" />
            <path d="M2.500 11h11M2.500 13.500h11M2.500 16h8" stroke="#fff" />
            <circle cx="15.500" cy="23.500" r="7.500" fill="#d6d2d0" fillOpacity=".92" stroke="#85817f" />
            <text x="15.500" y="27.500" fontFamily="Open Sans, sans-serif" fontSize="12" textAnchor="middle" fill="#222">1</text>
          </svg>
        </ActionCenter>
        <ShowDesktop aria-label="Show desktop" />
      </Tray>
    </Taskbar>
  );
}

export default function App() {
  return (
    <Screen>
      <GlobalStyle />
      <BrowserChrome />
      <Site />
      <WindowsTaskbar />
    </Screen>
  );
}
